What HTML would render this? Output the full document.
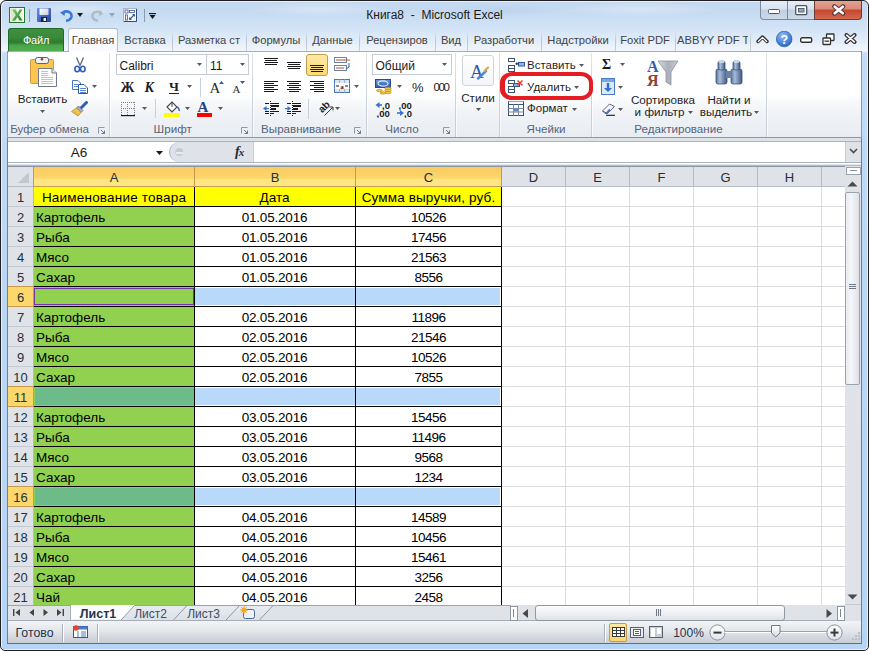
<!DOCTYPE html><html><head><meta charset="utf-8"><style>

*{margin:0;padding:0;box-sizing:border-box}
html,body{width:869px;height:651px;overflow:hidden;background:#fff;font-family:"Liberation Sans",sans-serif}
.ab{position:absolute}
.t{position:absolute;white-space:nowrap;line-height:1}
.c{font-size:13.5px;color:#000}
.hd{font-size:13px;color:#2b3a4a}
.ui{font-size:12px;color:#1e395b}

</style></head><body>
<div class="ab" style="left:0;top:0;width:869px;height:651px;border:1px solid #202020;border-radius:6px 6px 5px 5px;background:linear-gradient(180deg,#c2d8f1 0,#c6dbf2 12px,#d2e3f6 27px,#e0ebf8 38px,#f2f6fb 50px,#c4dcf5 52px,#bad6f5 300px,#b6d4f5 100%);box-shadow:inset 1px 1px 0 #e6f0fa,inset -1px -1px 0 #e6f0fa;overflow:hidden"></div>
<div class="ab" style="left:20px;top:2px;width:120px;height:14px;background:radial-gradient(ellipse at center,rgba(255,255,255,0.35) 0,rgba(255,255,255,0) 70%)"></div>
<div class="ab" style="left:250px;top:1px;width:140px;height:16px;background:radial-gradient(ellipse at center,rgba(255,255,255,0.30) 0,rgba(255,255,255,0) 70%)"></div>
<div class="ab" style="left:440px;top:3px;width:120px;height:14px;background:radial-gradient(ellipse at center,rgba(180,205,235,0.45) 0,rgba(180,205,235,0) 70%)"></div>
<div class="ab" style="left:560px;top:1px;width:160px;height:16px;background:radial-gradient(ellipse at center,rgba(255,255,255,0.30) 0,rgba(255,255,255,0) 70%)"></div>
<div class="ab" style="left:7px;top:51px;width:855px;height:593px;background:#6f7f94"></div>
<div class="ab" style="left:8px;top:163px;width:837px;height:443px;background:#fff"></div>
<div class="ab" style="left:8px;top:163px;width:853px;height:1px;background:#ffffff"></div>
<div class="ab" style="left:8px;top:164px;width:853px;height:1px;background:#e4e8ed"></div>
<div class="ab" style="left:8px;top:165px;width:853px;height:1px;background:#b4bcc6"></div>
<div class="ab" style="left:8px;top:166px;width:853px;height:1px;background:#8c96a2"></div>
<div class="ab" style="left:8px;top:167px;width:837px;height:19px;background:#dfe3e8"></div>
<div class="ab" style="left:8px;top:186px;width:837px;height:1px;background:#b7bec8"></div>
<div class="ab" style="left:8px;top:187px;width:25px;height:419px;background:#dfe3e8"></div>
<div class="ab" style="left:33px;top:167px;width:1px;height:439px;background:#b3bac4"></div>
<div class="ab" style="left:34px;top:206px;width:811px;height:1px;background:#dadcdd"></div>
<div class="ab" style="left:34px;top:226px;width:811px;height:1px;background:#dadcdd"></div>
<div class="ab" style="left:34px;top:246px;width:811px;height:1px;background:#dadcdd"></div>
<div class="ab" style="left:34px;top:266px;width:811px;height:1px;background:#dadcdd"></div>
<div class="ab" style="left:34px;top:286px;width:811px;height:1px;background:#dadcdd"></div>
<div class="ab" style="left:34px;top:306px;width:811px;height:1px;background:#dadcdd"></div>
<div class="ab" style="left:34px;top:326px;width:811px;height:1px;background:#dadcdd"></div>
<div class="ab" style="left:34px;top:346px;width:811px;height:1px;background:#dadcdd"></div>
<div class="ab" style="left:34px;top:366px;width:811px;height:1px;background:#dadcdd"></div>
<div class="ab" style="left:34px;top:386px;width:811px;height:1px;background:#dadcdd"></div>
<div class="ab" style="left:34px;top:406px;width:811px;height:1px;background:#dadcdd"></div>
<div class="ab" style="left:34px;top:426px;width:811px;height:1px;background:#dadcdd"></div>
<div class="ab" style="left:34px;top:446px;width:811px;height:1px;background:#dadcdd"></div>
<div class="ab" style="left:34px;top:466px;width:811px;height:1px;background:#dadcdd"></div>
<div class="ab" style="left:34px;top:486px;width:811px;height:1px;background:#dadcdd"></div>
<div class="ab" style="left:34px;top:506px;width:811px;height:1px;background:#dadcdd"></div>
<div class="ab" style="left:34px;top:526px;width:811px;height:1px;background:#dadcdd"></div>
<div class="ab" style="left:34px;top:546px;width:811px;height:1px;background:#dadcdd"></div>
<div class="ab" style="left:34px;top:566px;width:811px;height:1px;background:#dadcdd"></div>
<div class="ab" style="left:34px;top:586px;width:811px;height:1px;background:#dadcdd"></div>
<div class="ab" style="left:34px;top:606px;width:811px;height:1px;background:#dadcdd"></div>
<div class="ab" style="left:194px;top:187px;width:1px;height:419px;background:#dadcdd"></div>
<div class="ab" style="left:355px;top:187px;width:1px;height:419px;background:#dadcdd"></div>
<div class="ab" style="left:501px;top:187px;width:1px;height:419px;background:#dadcdd"></div>
<div class="ab" style="left:565px;top:187px;width:1px;height:419px;background:#dadcdd"></div>
<div class="ab" style="left:629px;top:187px;width:1px;height:419px;background:#dadcdd"></div>
<div class="ab" style="left:693px;top:187px;width:1px;height:419px;background:#dadcdd"></div>
<div class="ab" style="left:757px;top:187px;width:1px;height:419px;background:#dadcdd"></div>
<div class="ab" style="left:821px;top:187px;width:1px;height:419px;background:#dadcdd"></div>
<div class="ab" style="left:8px;top:206px;width:25px;height:1px;background:#c3c9d1"></div>
<div class="ab" style="left:8px;top:226px;width:25px;height:1px;background:#c3c9d1"></div>
<div class="ab" style="left:8px;top:246px;width:25px;height:1px;background:#c3c9d1"></div>
<div class="ab" style="left:8px;top:266px;width:25px;height:1px;background:#c3c9d1"></div>
<div class="ab" style="left:8px;top:286px;width:25px;height:1px;background:#c3c9d1"></div>
<div class="ab" style="left:8px;top:306px;width:25px;height:1px;background:#c3c9d1"></div>
<div class="ab" style="left:8px;top:326px;width:25px;height:1px;background:#c3c9d1"></div>
<div class="ab" style="left:8px;top:346px;width:25px;height:1px;background:#c3c9d1"></div>
<div class="ab" style="left:8px;top:366px;width:25px;height:1px;background:#c3c9d1"></div>
<div class="ab" style="left:8px;top:386px;width:25px;height:1px;background:#c3c9d1"></div>
<div class="ab" style="left:8px;top:406px;width:25px;height:1px;background:#c3c9d1"></div>
<div class="ab" style="left:8px;top:426px;width:25px;height:1px;background:#c3c9d1"></div>
<div class="ab" style="left:8px;top:446px;width:25px;height:1px;background:#c3c9d1"></div>
<div class="ab" style="left:8px;top:466px;width:25px;height:1px;background:#c3c9d1"></div>
<div class="ab" style="left:8px;top:486px;width:25px;height:1px;background:#c3c9d1"></div>
<div class="ab" style="left:8px;top:506px;width:25px;height:1px;background:#c3c9d1"></div>
<div class="ab" style="left:8px;top:526px;width:25px;height:1px;background:#c3c9d1"></div>
<div class="ab" style="left:8px;top:546px;width:25px;height:1px;background:#c3c9d1"></div>
<div class="ab" style="left:8px;top:566px;width:25px;height:1px;background:#c3c9d1"></div>
<div class="ab" style="left:8px;top:586px;width:25px;height:1px;background:#c3c9d1"></div>
<div class="ab" style="left:8px;top:606px;width:25px;height:1px;background:#c3c9d1"></div>
<div class="ab" style="left:194px;top:167px;width:1px;height:19px;background:#b3bac4"></div>
<div class="ab" style="left:355px;top:167px;width:1px;height:19px;background:#b3bac4"></div>
<div class="ab" style="left:501px;top:167px;width:1px;height:19px;background:#b3bac4"></div>
<div class="ab" style="left:565px;top:167px;width:1px;height:19px;background:#b3bac4"></div>
<div class="ab" style="left:629px;top:167px;width:1px;height:19px;background:#b3bac4"></div>
<div class="ab" style="left:693px;top:167px;width:1px;height:19px;background:#b3bac4"></div>
<div class="ab" style="left:757px;top:167px;width:1px;height:19px;background:#b3bac4"></div>
<div class="ab" style="left:821px;top:167px;width:1px;height:19px;background:#b3bac4"></div>
<div class="ab" style="left:34px;top:167px;width:467px;height:19px;background:linear-gradient(180deg,#f9cd60 0,#fbd56c 11px,#fde37e 12px,#fde886 100%)"></div>
<div class="ab" style="left:34px;top:186px;width:467px;height:1px;background:#c89a4e"></div>
<div class="ab" style="left:194px;top:167px;width:1px;height:19px;background:#c89a4e"></div>
<div class="ab" style="left:355px;top:167px;width:1px;height:19px;background:#c89a4e"></div>
<div class="ab" style="left:501px;top:167px;width:1px;height:20px;background:#c89a4e"></div>
<div class="ab" style="left:33px;top:167px;width:1px;height:20px;background:#c89a4e"></div>
<svg class="ab" style="left:18px;top:172px" width="12" height="12"><path d="M11 0 L11 11 L0 11 Z" fill="#c2c8d0"/></svg>
<div class="t" style="left:14.0px;top:171.3px;width:200px;text-align:center;font-size:13px;color:#262e38">A</div>
<div class="t" style="left:175.0px;top:171.3px;width:200px;text-align:center;font-size:13px;color:#262e38">B</div>
<div class="t" style="left:328.5px;top:171.3px;width:200px;text-align:center;font-size:13px;color:#262e38">C</div>
<div class="t" style="left:433.5px;top:171.3px;width:200px;text-align:center;font-size:13px;color:#262e38">D</div>
<div class="t" style="left:497.5px;top:171.3px;width:200px;text-align:center;font-size:13px;color:#262e38">E</div>
<div class="t" style="left:561.5px;top:171.3px;width:200px;text-align:center;font-size:13px;color:#262e38">F</div>
<div class="t" style="left:625.5px;top:171.3px;width:200px;text-align:center;font-size:13px;color:#262e38">G</div>
<div class="t" style="left:689.5px;top:171.3px;width:200px;text-align:center;font-size:13px;color:#262e38">H</div>
<div class="t" style="left:753.5px;top:171.3px;width:200px;text-align:center;font-size:13px;color:#262e38">I</div>
<div class="ab" style="left:34px;top:187px;width:467px;height:19px;background:#ffff00"></div>
<div class="ab" style="left:34px;top:207px;width:160px;height:19px;background:#92d050"></div>
<div class="ab" style="left:34px;top:227px;width:160px;height:19px;background:#92d050"></div>
<div class="ab" style="left:34px;top:247px;width:160px;height:19px;background:#92d050"></div>
<div class="ab" style="left:34px;top:267px;width:160px;height:19px;background:#92d050"></div>
<div class="ab" style="left:34px;top:287px;width:160px;height:19px;background:#92d050"></div>
<div class="ab" style="left:34px;top:307px;width:160px;height:19px;background:#92d050"></div>
<div class="ab" style="left:34px;top:327px;width:160px;height:19px;background:#92d050"></div>
<div class="ab" style="left:34px;top:347px;width:160px;height:19px;background:#92d050"></div>
<div class="ab" style="left:34px;top:367px;width:160px;height:19px;background:#92d050"></div>
<div class="ab" style="left:34px;top:387px;width:160px;height:19px;background:#92d050"></div>
<div class="ab" style="left:34px;top:407px;width:160px;height:19px;background:#92d050"></div>
<div class="ab" style="left:34px;top:427px;width:160px;height:19px;background:#92d050"></div>
<div class="ab" style="left:34px;top:447px;width:160px;height:19px;background:#92d050"></div>
<div class="ab" style="left:34px;top:467px;width:160px;height:19px;background:#92d050"></div>
<div class="ab" style="left:34px;top:487px;width:160px;height:19px;background:#92d050"></div>
<div class="ab" style="left:34px;top:507px;width:160px;height:19px;background:#92d050"></div>
<div class="ab" style="left:34px;top:527px;width:160px;height:19px;background:#92d050"></div>
<div class="ab" style="left:34px;top:547px;width:160px;height:19px;background:#92d050"></div>
<div class="ab" style="left:34px;top:567px;width:160px;height:19px;background:#92d050"></div>
<div class="ab" style="left:34px;top:587px;width:160px;height:19px;background:#92d050"></div>
<div class="ab" style="left:33px;top:286px;width:1px;height:21px;background:#c89a4e"></div>
<div class="ab" style="left:8px;top:287px;width:25px;height:19px;background:#fcd86c"></div>
<div class="ab" style="left:8px;top:286px;width:25px;height:1px;background:#c89a4e"></div>
<div class="ab" style="left:8px;top:306px;width:25px;height:1px;background:#c89a4e"></div>
<div class="ab" style="left:195px;top:288px;width:305px;height:17px;background:#b9d9fa"></div>
<div class="ab" style="left:33px;top:386px;width:1px;height:21px;background:#c89a4e"></div>
<div class="ab" style="left:8px;top:387px;width:25px;height:19px;background:#fcd86c"></div>
<div class="ab" style="left:8px;top:386px;width:25px;height:1px;background:#c89a4e"></div>
<div class="ab" style="left:8px;top:406px;width:25px;height:1px;background:#c89a4e"></div>
<div class="ab" style="left:195px;top:388px;width:305px;height:17px;background:#b9d9fa"></div>
<div class="ab" style="left:35px;top:388px;width:159px;height:17px;background:#6dbb88"></div>
<div class="ab" style="left:33px;top:486px;width:1px;height:21px;background:#c89a4e"></div>
<div class="ab" style="left:8px;top:487px;width:25px;height:19px;background:#fcd86c"></div>
<div class="ab" style="left:8px;top:486px;width:25px;height:1px;background:#c89a4e"></div>
<div class="ab" style="left:8px;top:506px;width:25px;height:1px;background:#c89a4e"></div>
<div class="ab" style="left:195px;top:488px;width:305px;height:17px;background:#b9d9fa"></div>
<div class="ab" style="left:35px;top:488px;width:159px;height:17px;background:#6dbb88"></div>
<div class="ab" style="left:34px;top:288px;width:160px;height:17px;border:1px solid #7437a8"></div>
<div class="ab" style="left:34px;top:206px;width:468px;height:1px;background:#000"></div>
<div class="ab" style="left:34px;top:226px;width:468px;height:1px;background:#000"></div>
<div class="ab" style="left:34px;top:246px;width:468px;height:1px;background:#000"></div>
<div class="ab" style="left:34px;top:266px;width:468px;height:1px;background:#000"></div>
<div class="ab" style="left:34px;top:286px;width:468px;height:1px;background:#000"></div>
<div class="ab" style="left:34px;top:306px;width:468px;height:1px;background:#000"></div>
<div class="ab" style="left:34px;top:326px;width:468px;height:1px;background:#000"></div>
<div class="ab" style="left:34px;top:346px;width:468px;height:1px;background:#000"></div>
<div class="ab" style="left:34px;top:366px;width:468px;height:1px;background:#000"></div>
<div class="ab" style="left:34px;top:386px;width:468px;height:1px;background:#000"></div>
<div class="ab" style="left:34px;top:406px;width:468px;height:1px;background:#000"></div>
<div class="ab" style="left:34px;top:426px;width:468px;height:1px;background:#000"></div>
<div class="ab" style="left:34px;top:446px;width:468px;height:1px;background:#000"></div>
<div class="ab" style="left:34px;top:466px;width:468px;height:1px;background:#000"></div>
<div class="ab" style="left:34px;top:486px;width:468px;height:1px;background:#000"></div>
<div class="ab" style="left:34px;top:506px;width:468px;height:1px;background:#000"></div>
<div class="ab" style="left:34px;top:526px;width:468px;height:1px;background:#000"></div>
<div class="ab" style="left:34px;top:546px;width:468px;height:1px;background:#000"></div>
<div class="ab" style="left:34px;top:566px;width:468px;height:1px;background:#000"></div>
<div class="ab" style="left:34px;top:586px;width:468px;height:1px;background:#000"></div>
<div class="ab" style="left:34px;top:606px;width:468px;height:1px;background:#000"></div>
<div class="ab" style="left:194px;top:187px;width:1px;height:419px;background:#000"></div>
<div class="ab" style="left:355px;top:187px;width:1px;height:419px;background:#000"></div>
<div class="ab" style="left:501px;top:187px;width:1px;height:419px;background:#000"></div>
<div class="t" style="left:5.5px;top:191px;width:30px;text-align:center;font-size:13px;color:#262e38">1</div>
<div class="t" style="left:5.5px;top:211px;width:30px;text-align:center;font-size:13px;color:#262e38">2</div>
<div class="t" style="left:5.5px;top:231px;width:30px;text-align:center;font-size:13px;color:#262e38">3</div>
<div class="t" style="left:5.5px;top:251px;width:30px;text-align:center;font-size:13px;color:#262e38">4</div>
<div class="t" style="left:5.5px;top:271px;width:30px;text-align:center;font-size:13px;color:#262e38">5</div>
<div class="t" style="left:5.5px;top:291px;width:30px;text-align:center;font-size:13px;color:#262e38">6</div>
<div class="t" style="left:5.5px;top:311px;width:30px;text-align:center;font-size:13px;color:#262e38">7</div>
<div class="t" style="left:5.5px;top:331px;width:30px;text-align:center;font-size:13px;color:#262e38">8</div>
<div class="t" style="left:5.5px;top:351px;width:30px;text-align:center;font-size:13px;color:#262e38">9</div>
<div class="t" style="left:5.5px;top:371px;width:30px;text-align:center;font-size:13px;color:#262e38">10</div>
<div class="t" style="left:5.5px;top:391px;width:30px;text-align:center;font-size:13px;color:#262e38">11</div>
<div class="t" style="left:5.5px;top:411px;width:30px;text-align:center;font-size:13px;color:#262e38">12</div>
<div class="t" style="left:5.5px;top:431px;width:30px;text-align:center;font-size:13px;color:#262e38">13</div>
<div class="t" style="left:5.5px;top:451px;width:30px;text-align:center;font-size:13px;color:#262e38">14</div>
<div class="t" style="left:5.5px;top:471px;width:30px;text-align:center;font-size:13px;color:#262e38">15</div>
<div class="t" style="left:5.5px;top:491px;width:30px;text-align:center;font-size:13px;color:#262e38">16</div>
<div class="t" style="left:5.5px;top:511px;width:30px;text-align:center;font-size:13px;color:#262e38">17</div>
<div class="t" style="left:5.5px;top:531px;width:30px;text-align:center;font-size:13px;color:#262e38">18</div>
<div class="t" style="left:5.5px;top:551px;width:30px;text-align:center;font-size:13px;color:#262e38">19</div>
<div class="t" style="left:5.5px;top:571px;width:30px;text-align:center;font-size:13px;color:#262e38">20</div>
<div class="t" style="left:5.5px;top:591px;width:30px;text-align:center;font-size:13px;color:#262e38">21</div>
<div class="t" style="left:14.0px;top:191px;width:200px;text-align:center;font-size:13.5px;color:#000;letter-spacing:0.2px">Наименование товара</div>
<div class="t" style="left:174.5px;top:191px;width:200px;text-align:center;font-size:13.5px;color:#000">Дата</div>
<div class="t" style="left:328.5px;top:191px;width:200px;text-align:center;font-size:13.5px;color:#000;letter-spacing:0.15px">Сумма выручки, руб.</div>
<div class="t" style="left:36px;top:211px;font-size:13.5px;color:#000">Картофель</div>
<div class="t" style="left:174.5px;top:211px;width:200px;text-align:center;font-size:13.5px;color:#000;letter-spacing:-0.2px">01.05.2016</div>
<div class="t" style="left:328.5px;top:211px;width:200px;text-align:center;font-size:13.5px;color:#000;letter-spacing:-0.5px">10526</div>
<div class="t" style="left:36px;top:231px;font-size:13.5px;color:#000">Рыба</div>
<div class="t" style="left:174.5px;top:231px;width:200px;text-align:center;font-size:13.5px;color:#000;letter-spacing:-0.2px">01.05.2016</div>
<div class="t" style="left:328.5px;top:231px;width:200px;text-align:center;font-size:13.5px;color:#000;letter-spacing:-0.5px">17456</div>
<div class="t" style="left:36px;top:251px;font-size:13.5px;color:#000">Мясо</div>
<div class="t" style="left:174.5px;top:251px;width:200px;text-align:center;font-size:13.5px;color:#000;letter-spacing:-0.2px">01.05.2016</div>
<div class="t" style="left:328.5px;top:251px;width:200px;text-align:center;font-size:13.5px;color:#000;letter-spacing:-0.5px">21563</div>
<div class="t" style="left:36px;top:271px;font-size:13.5px;color:#000">Сахар</div>
<div class="t" style="left:174.5px;top:271px;width:200px;text-align:center;font-size:13.5px;color:#000;letter-spacing:-0.2px">01.05.2016</div>
<div class="t" style="left:328.5px;top:271px;width:200px;text-align:center;font-size:13.5px;color:#000;letter-spacing:-0.5px">8556</div>
<div class="t" style="left:36px;top:311px;font-size:13.5px;color:#000">Картофель</div>
<div class="t" style="left:174.5px;top:311px;width:200px;text-align:center;font-size:13.5px;color:#000;letter-spacing:-0.2px">02.05.2016</div>
<div class="t" style="left:328.5px;top:311px;width:200px;text-align:center;font-size:13.5px;color:#000;letter-spacing:-0.5px">11896</div>
<div class="t" style="left:36px;top:331px;font-size:13.5px;color:#000">Рыба</div>
<div class="t" style="left:174.5px;top:331px;width:200px;text-align:center;font-size:13.5px;color:#000;letter-spacing:-0.2px">02.05.2016</div>
<div class="t" style="left:328.5px;top:331px;width:200px;text-align:center;font-size:13.5px;color:#000;letter-spacing:-0.5px">21546</div>
<div class="t" style="left:36px;top:351px;font-size:13.5px;color:#000">Мясо</div>
<div class="t" style="left:174.5px;top:351px;width:200px;text-align:center;font-size:13.5px;color:#000;letter-spacing:-0.2px">02.05.2016</div>
<div class="t" style="left:328.5px;top:351px;width:200px;text-align:center;font-size:13.5px;color:#000;letter-spacing:-0.5px">10526</div>
<div class="t" style="left:36px;top:371px;font-size:13.5px;color:#000">Сахар</div>
<div class="t" style="left:174.5px;top:371px;width:200px;text-align:center;font-size:13.5px;color:#000;letter-spacing:-0.2px">02.05.2016</div>
<div class="t" style="left:328.5px;top:371px;width:200px;text-align:center;font-size:13.5px;color:#000;letter-spacing:-0.5px">7855</div>
<div class="t" style="left:36px;top:411px;font-size:13.5px;color:#000">Картофель</div>
<div class="t" style="left:174.5px;top:411px;width:200px;text-align:center;font-size:13.5px;color:#000;letter-spacing:-0.2px">03.05.2016</div>
<div class="t" style="left:328.5px;top:411px;width:200px;text-align:center;font-size:13.5px;color:#000;letter-spacing:-0.5px">15456</div>
<div class="t" style="left:36px;top:431px;font-size:13.5px;color:#000">Рыба</div>
<div class="t" style="left:174.5px;top:431px;width:200px;text-align:center;font-size:13.5px;color:#000;letter-spacing:-0.2px">03.05.2016</div>
<div class="t" style="left:328.5px;top:431px;width:200px;text-align:center;font-size:13.5px;color:#000;letter-spacing:-0.5px">11496</div>
<div class="t" style="left:36px;top:451px;font-size:13.5px;color:#000">Мясо</div>
<div class="t" style="left:174.5px;top:451px;width:200px;text-align:center;font-size:13.5px;color:#000;letter-spacing:-0.2px">03.05.2016</div>
<div class="t" style="left:328.5px;top:451px;width:200px;text-align:center;font-size:13.5px;color:#000;letter-spacing:-0.5px">9568</div>
<div class="t" style="left:36px;top:471px;font-size:13.5px;color:#000">Сахар</div>
<div class="t" style="left:174.5px;top:471px;width:200px;text-align:center;font-size:13.5px;color:#000;letter-spacing:-0.2px">03.05.2016</div>
<div class="t" style="left:328.5px;top:471px;width:200px;text-align:center;font-size:13.5px;color:#000;letter-spacing:-0.5px">1234</div>
<div class="t" style="left:36px;top:511px;font-size:13.5px;color:#000">Картофель</div>
<div class="t" style="left:174.5px;top:511px;width:200px;text-align:center;font-size:13.5px;color:#000;letter-spacing:-0.2px">04.05.2016</div>
<div class="t" style="left:328.5px;top:511px;width:200px;text-align:center;font-size:13.5px;color:#000;letter-spacing:-0.5px">14589</div>
<div class="t" style="left:36px;top:531px;font-size:13.5px;color:#000">Рыба</div>
<div class="t" style="left:174.5px;top:531px;width:200px;text-align:center;font-size:13.5px;color:#000;letter-spacing:-0.2px">04.05.2016</div>
<div class="t" style="left:328.5px;top:531px;width:200px;text-align:center;font-size:13.5px;color:#000;letter-spacing:-0.5px">10456</div>
<div class="t" style="left:36px;top:551px;font-size:13.5px;color:#000">Мясо</div>
<div class="t" style="left:174.5px;top:551px;width:200px;text-align:center;font-size:13.5px;color:#000;letter-spacing:-0.2px">04.05.2016</div>
<div class="t" style="left:328.5px;top:551px;width:200px;text-align:center;font-size:13.5px;color:#000;letter-spacing:-0.5px">15461</div>
<div class="t" style="left:36px;top:571px;font-size:13.5px;color:#000">Сахар</div>
<div class="t" style="left:174.5px;top:571px;width:200px;text-align:center;font-size:13.5px;color:#000;letter-spacing:-0.2px">04.05.2016</div>
<div class="t" style="left:328.5px;top:571px;width:200px;text-align:center;font-size:13.5px;color:#000;letter-spacing:-0.5px">3256</div>
<div class="t" style="left:36px;top:591px;font-size:13.5px;color:#000">Чай</div>
<div class="t" style="left:174.5px;top:591px;width:200px;text-align:center;font-size:13.5px;color:#000;letter-spacing:-0.2px">04.05.2016</div>
<div class="t" style="left:328.5px;top:591px;width:200px;text-align:center;font-size:13.5px;color:#000;letter-spacing:-0.5px">2458</div>
<div class="t" style="left:334.50px;top:9.34px;width:200px;text-align:center;font-size:12px;color:#1a1a1a">Книга8&nbsp;&nbsp;-&nbsp;&nbsp;Microsoft Excel</div>
<svg class="ab" style="left:9px;top:7px;" width="17" height="17" viewBox="0 0 17 17"><defs><linearGradient id="xg" x1="0" y1="0" x2="1" y2="1"><stop offset="0" stop-color="#7fd36a"/><stop offset="1" stop-color="#1f7a2c"/></linearGradient></defs><rect x="0.5" y="0.5" width="15" height="15" fill="#f4f8ee" stroke="#1f7a2c"/><rect x="1.5" y="1.5" width="6" height="13" fill="#dfe8cc"/><path d="M3 2.5 L6.5 2.5 L8.5 6 L10.5 2.5 L13.5 2.5 L10 8 L13.5 13.5 L10.5 13.5 L8.5 10 L6 13.5 L3 13.5 L6.8 8 Z" fill="url(#xg)"/></svg>
<div class="ab" style="left:29px;top:9px;width:1px;height:13px;background:#8a9bb0"></div>
<svg class="ab" style="left:37px;top:8px;" width="15" height="14" viewBox="0 0 15 14"><defs><linearGradient id="sg" x1="0" y1="0" x2="1" y2="1"><stop offset="0" stop-color="#6b8fe0"/><stop offset="1" stop-color="#26459a"/></linearGradient><linearGradient id="sl" x1="0" y1="0" x2="1" y2="1"><stop offset="0" stop-color="#fff"/><stop offset="1" stop-color="#c8d0dc"/></linearGradient></defs><rect x="0" y="0" width="14" height="14" rx="1" fill="url(#sg)"/><rect x="2.5" y="0.5" width="9" height="6.5" fill="url(#sl)"/><rect x="4" y="9" width="6" height="5" fill="#1a2238"/><rect x="6.5" y="10" width="2.5" height="3" fill="#e8ecf2"/></svg>
<svg class="ab" style="left:59px;top:8px;" width="14" height="14" viewBox="0 0 14 14"><path d="M1 4.5 L6.5 2 L5.5 8 Z" fill="#3a78d8"/><path d="M4.5 4.2 C9 2 13 4.5 12.5 8.5 C12 11 10 12.5 7 12.8" fill="none" stroke="#3a78d8" stroke-width="2.6"/></svg>
<svg class="ab" style="left:77px;top:13px;" width="7" height="5" viewBox="0 0 7 5"><path d="M0 0 L6 0 L3 4 Z" fill="#1a1a1a"/></svg>
<svg class="ab" style="left:90px;top:8px;" width="14" height="14" viewBox="0 0 14 14"><path d="M10 2 L13 6 L9 8 Z" fill="#b2bac4"/><path d="M11 5 C7 2.5 2 4 2.5 8.5 C3 11 5 12.5 8 12.5" fill="none" stroke="#b2bac4" stroke-width="2.6"/></svg>
<svg class="ab" style="left:109px;top:13px;" width="7" height="5" viewBox="0 0 7 5"><path d="M0 0 L6 0 L3 4 Z" fill="#9aa6b4"/></svg>
<svg class="ab" style="left:123px;top:8px;" width="14" height="14" viewBox="0 0 14 14"><rect x="0.5" y="0.5" width="13" height="13" fill="#f6f8fb" stroke="#aab4c2"/><path d="M13.5 1 L13.5 13.5 L1 13.5" fill="none" stroke="#2f4a86"/><rect x="2" y="2" width="3" height="3" fill="#fff" stroke="#3a5590" stroke-width="0.8"/><rect x="6.5" y="2.5" width="5" height="2" fill="#fff" stroke="#3a5590" stroke-width="0.8"/><rect x="2.5" y="7" width="2" height="5" fill="#fff" stroke="#3a5590" stroke-width="0.8"/><path d="M7 11 L11 7" stroke="#3a5590" stroke-width="1.1"/><path d="M9.5 6.5 L11.5 6.5 L11.5 8.5 M6.5 9.5 L6.5 11.5 L8.5 11.5" fill="none" stroke="#3a5590" stroke-width="1"/></svg>
<div class="ab" style="left:144px;top:9px;width:1px;height:13px;background:#8a9bb0"></div>
<svg class="ab" style="left:149px;top:13px;" width="8" height="7" viewBox="0 0 8 7"><rect x="0" y="0" width="7" height="1.2" fill="#1a1a1a"/><path d="M0.5 2 L6.5 2 L3.5 6 Z" fill="#1a1a1a"/></svg>
<div class="ab" style="left:760px;top:1px;width:55px;height:19px;border:1px solid #7a8a9e;border-top:none;border-radius:0 0 0 4px;background:linear-gradient(180deg,#e5edf7 0,#d8e3f0 45%,#c0cfe0 50%,#ccd9e8 100%)"></div>
<div class="ab" style="left:787px;top:1px;width:1px;height:18px;background:#7a8a9e"></div>
<div class="ab" style="left:814px;top:1px;width:48px;height:19px;border:1px solid #6e3c34;border-top:none;border-radius:0 0 4px 0;background:linear-gradient(180deg,#e8a294 0,#d98a78 45%,#c7452c 50%,#d46a50 100%)"></div>
<svg class="ab" style="left:768px;top:9px;" width="13" height="6" viewBox="0 0 13 6"><rect x="0.5" y="0.5" width="11" height="4" rx="1" fill="#fff" stroke="#4a5668"/></svg>
<svg class="ab" style="left:795px;top:5px;" width="13" height="11" viewBox="0 0 13 11"><rect x="0.7" y="0.7" width="11" height="9" rx="1" fill="#fff" stroke="#4a5668" stroke-width="1.3"/><rect x="3.5" y="3.5" width="5.5" height="3.5" fill="#9aa8b8" stroke="#4a5668" stroke-width="0.9"/></svg>
<svg class="ab" style="left:832px;top:4px;" width="14" height="12" viewBox="0 0 14 12"><path d="M2.5 2.5 L11 9.5 M11 2.5 L2.5 9.5" stroke="#5a3a38" stroke-width="4.6" stroke-linecap="round"/><path d="M2.7 2.7 L10.8 9.3 M10.8 2.7 L2.7 9.3" stroke="#fff" stroke-width="2.6" stroke-linecap="round"/></svg>
<div class="ab" style="left:8px;top:28px;width:56px;height:24px;border:1px solid #1d6b27;border-bottom:none;border-radius:3px 3px 0 0;background:linear-gradient(180deg,#3f8f3e 0,#3a8a3a 35%,#2e7c31 58%,#4ba648 72%,#55ae4f 100%)"></div>
<div class="t" style="left:8.00px;top:35.19px;width:56px;text-align:center;font-size:11px;color:#fff;letter-spacing:-0.2px">Файл</div>
<div class="ab" style="left:68px;top:28px;width:50px;height:24px;border:1px solid #b4c0cf;border-bottom:none;border-radius:3px 3px 0 0;background:linear-gradient(180deg,#fefefe 0,#f7f9fc 100%)"></div>
<div class="t" style="left:70.00px;top:35.02px;width:46px;text-align:center;font-size:11.2px;color:#444;overflow:hidden;">Главная</div>
<div class="t" style="left:120.00px;top:35.02px;width:50px;text-align:center;font-size:11.2px;color:#444;overflow:hidden;">Вставка</div>
<div class="t" style="left:174.00px;top:35.02px;width:70px;text-align:center;font-size:11.2px;color:#444;overflow:hidden;">Разметка ст</div>
<div class="t" style="left:248.00px;top:35.02px;width:56px;text-align:center;font-size:11.2px;color:#444;overflow:hidden;">Формулы</div>
<div class="t" style="left:308.00px;top:35.02px;width:49px;text-align:center;font-size:11.2px;color:#444;overflow:hidden;">Данные</div>
<div class="t" style="left:361.00px;top:35.02px;width:72px;text-align:center;font-size:11.2px;color:#444;overflow:hidden;">Рецензиров</div>
<div class="t" style="left:437.00px;top:35.02px;width:28px;text-align:center;font-size:11.2px;color:#444;overflow:hidden;">Вид</div>
<div class="t" style="left:469.00px;top:35.02px;width:70px;text-align:center;font-size:11.2px;color:#444;overflow:hidden;">Разработчи</div>
<div class="t" style="left:543.00px;top:35.02px;width:70px;text-align:center;font-size:11.2px;color:#444;overflow:hidden;">Надстройки</div>
<div class="t" style="left:617.00px;top:35.02px;width:56px;text-align:center;font-size:11.2px;color:#444;overflow:hidden;">Foxit PDF</div>
<div class="t" style="left:677.00px;top:35.02px;width:71px;text-align:center;font-size:11.2px;color:#444;overflow:hidden;">ABBYY PDF T</div>
<div class="ab" style="left:172px;top:31px;width:1px;height:20px;background:linear-gradient(180deg,rgba(160,175,195,0) 0,#b8c4d2 50%,#c8d2de 100%)"></div>
<div class="ab" style="left:246px;top:31px;width:1px;height:20px;background:linear-gradient(180deg,rgba(160,175,195,0) 0,#b8c4d2 50%,#c8d2de 100%)"></div>
<div class="ab" style="left:306px;top:31px;width:1px;height:20px;background:linear-gradient(180deg,rgba(160,175,195,0) 0,#b8c4d2 50%,#c8d2de 100%)"></div>
<div class="ab" style="left:359px;top:31px;width:1px;height:20px;background:linear-gradient(180deg,rgba(160,175,195,0) 0,#b8c4d2 50%,#c8d2de 100%)"></div>
<div class="ab" style="left:435px;top:31px;width:1px;height:20px;background:linear-gradient(180deg,rgba(160,175,195,0) 0,#b8c4d2 50%,#c8d2de 100%)"></div>
<div class="ab" style="left:467px;top:31px;width:1px;height:20px;background:linear-gradient(180deg,rgba(160,175,195,0) 0,#b8c4d2 50%,#c8d2de 100%)"></div>
<div class="ab" style="left:541px;top:31px;width:1px;height:20px;background:linear-gradient(180deg,rgba(160,175,195,0) 0,#b8c4d2 50%,#c8d2de 100%)"></div>
<div class="ab" style="left:615px;top:31px;width:1px;height:20px;background:linear-gradient(180deg,rgba(160,175,195,0) 0,#b8c4d2 50%,#c8d2de 100%)"></div>
<div class="ab" style="left:675px;top:31px;width:1px;height:20px;background:linear-gradient(180deg,rgba(160,175,195,0) 0,#b8c4d2 50%,#c8d2de 100%)"></div>
<div class="ab" style="left:750px;top:31px;width:1px;height:20px;background:linear-gradient(180deg,rgba(160,175,195,0) 0,#b8c4d2 50%,#c8d2de 100%)"></div>
<svg class="ab" style="left:756px;top:35px;" width="13" height="9" viewBox="0 0 13 9"><path d="M2 6.5 L6.5 2 L11 6.5" fill="none" stroke="#2e2e2e" stroke-width="3.4" stroke-linecap="round" stroke-linejoin="round"/><path d="M2.3 6.5 L6.5 2.3 L10.7 6.5" fill="none" stroke="#fff" stroke-width="1.2" stroke-linecap="round" stroke-linejoin="round"/></svg>
<svg class="ab" style="left:776px;top:31px;" width="17" height="17" viewBox="0 0 17 17"><defs><radialGradient id="hg" cx="40%" cy="30%" r="70%"><stop offset="0" stop-color="#8fc0f5"/><stop offset="1" stop-color="#2a66c8"/></radialGradient></defs><circle cx="8.2" cy="8" r="7.8" fill="url(#hg)" stroke="#2a5aa8" stroke-width="0.7"/><text x="8.2" y="13" font-family="Liberation Sans" font-weight="bold" font-size="12.5" fill="#fff" text-anchor="middle">?</text></svg>
<svg class="ab" style="left:800px;top:37px;" width="13" height="7" viewBox="0 0 13 7"><rect x="0.7" y="0.7" width="11" height="4.6" rx="1.5" fill="#fff" stroke="#333" stroke-width="1.4"/></svg>
<svg class="ab" style="left:822px;top:33px;" width="13" height="13" viewBox="0 0 13 13"><rect x="4.5" y="1" width="7.5" height="6.5" rx="0.5" fill="#fff" stroke="#333" stroke-width="1.3"/><rect x="1" y="5" width="7.5" height="6.5" rx="0.5" fill="#fff" stroke="#333" stroke-width="1.3"/><rect x="2.5" y="7.5" width="4.5" height="1.3" fill="#333"/></svg>
<svg class="ab" style="left:844px;top:33px;" width="13" height="11" viewBox="0 0 13 11"><path d="M2.5 2 L10.5 9 M10.5 2 L2.5 9" stroke="#333" stroke-width="4" stroke-linecap="round"/><path d="M2.7 2.2 L10.3 8.8 M10.3 2.2 L2.7 8.8" stroke="#fff" stroke-width="1.6" stroke-linecap="round"/></svg>
<div class="ab" style="left:7px;top:51px;width:855px;height:87px;border:1px solid #8e98a6;border-top-color:#a4adba;border-radius:2px 2px 0 0;background:linear-gradient(180deg,#ffffff 0,#ffffff 50%,#f6f8fa 60%,#eef1f5 78%,#e9edf2 100%)"></div>
<div class="ab" style="left:69px;top:51px;width:48px;height:1px;background:#fdfdfe"></div>
<div class="ab" style="left:109px;top:53px;width:1px;height:84px;background:linear-gradient(180deg,#dfe3e9 0,#cdd3dc 50%,#c8ced8 100%)"></div>
<div class="ab" style="left:110px;top:53px;width:1px;height:84px;background:rgba(255,255,255,0.7)"></div>
<div class="ab" style="left:252px;top:53px;width:1px;height:84px;background:linear-gradient(180deg,#dfe3e9 0,#cdd3dc 50%,#c8ced8 100%)"></div>
<div class="ab" style="left:253px;top:53px;width:1px;height:84px;background:rgba(255,255,255,0.7)"></div>
<div class="ab" style="left:366px;top:53px;width:1px;height:84px;background:linear-gradient(180deg,#dfe3e9 0,#cdd3dc 50%,#c8ced8 100%)"></div>
<div class="ab" style="left:367px;top:53px;width:1px;height:84px;background:rgba(255,255,255,0.7)"></div>
<div class="ab" style="left:455px;top:53px;width:1px;height:84px;background:linear-gradient(180deg,#dfe3e9 0,#cdd3dc 50%,#c8ced8 100%)"></div>
<div class="ab" style="left:456px;top:53px;width:1px;height:84px;background:rgba(255,255,255,0.7)"></div>
<div class="ab" style="left:499px;top:53px;width:1px;height:84px;background:linear-gradient(180deg,#dfe3e9 0,#cdd3dc 50%,#c8ced8 100%)"></div>
<div class="ab" style="left:500px;top:53px;width:1px;height:84px;background:rgba(255,255,255,0.7)"></div>
<div class="ab" style="left:591px;top:53px;width:1px;height:84px;background:linear-gradient(180deg,#dfe3e9 0,#cdd3dc 50%,#c8ced8 100%)"></div>
<div class="ab" style="left:592px;top:53px;width:1px;height:84px;background:rgba(255,255,255,0.7)"></div>
<div class="ab" style="left:766px;top:53px;width:1px;height:84px;background:linear-gradient(180deg,#dfe3e9 0,#cdd3dc 50%,#c8ced8 100%)"></div>
<div class="ab" style="left:767px;top:53px;width:1px;height:84px;background:rgba(255,255,255,0.7)"></div>
<div class="t" style="left:-10.40px;top:123.18px;width:120px;text-align:center;font-size:11.6px;color:#56647a">Буфер обмена</div>
<div class="t" style="left:112.70px;top:123.18px;width:120px;text-align:center;font-size:11.6px;color:#56647a">Шрифт</div>
<div class="t" style="left:241.00px;top:123.18px;width:120px;text-align:center;font-size:11.6px;color:#56647a">Выравнивание</div>
<div class="t" style="left:342.00px;top:123.18px;width:120px;text-align:center;font-size:11.6px;color:#56647a">Число</div>
<div class="t" style="left:486.00px;top:123.18px;width:120px;text-align:center;font-size:11.6px;color:#56647a">Ячейки</div>
<div class="t" style="left:618.50px;top:123.18px;width:120px;text-align:center;font-size:11.6px;color:#56647a">Редактирование</div>
<svg class="ab" style="left:98px;top:127px;" width="8" height="7" viewBox="0 0 8 7"><path d="M0.5 6.5 L0.5 0.5 L6.5 0.5" fill="none" stroke="#8e98a6"/><path d="M3 3 L6.5 6.5 M6.5 3.5 L6.5 6.5 L3.5 6.5" fill="none" stroke="#6e7886"/></svg>
<svg class="ab" style="left:241px;top:127px;" width="8" height="7" viewBox="0 0 8 7"><path d="M0.5 6.5 L0.5 0.5 L6.5 0.5" fill="none" stroke="#8e98a6"/><path d="M3 3 L6.5 6.5 M6.5 3.5 L6.5 6.5 L3.5 6.5" fill="none" stroke="#6e7886"/></svg>
<svg class="ab" style="left:354px;top:127px;" width="8" height="7" viewBox="0 0 8 7"><path d="M0.5 6.5 L0.5 0.5 L6.5 0.5" fill="none" stroke="#8e98a6"/><path d="M3 3 L6.5 6.5 M6.5 3.5 L6.5 6.5 L3.5 6.5" fill="none" stroke="#6e7886"/></svg>
<svg class="ab" style="left:443px;top:127px;" width="8" height="7" viewBox="0 0 8 7"><path d="M0.5 6.5 L0.5 0.5 L6.5 0.5" fill="none" stroke="#8e98a6"/><path d="M3 3 L6.5 6.5 M6.5 3.5 L6.5 6.5 L3.5 6.5" fill="none" stroke="#6e7886"/></svg>
<svg class="ab" style="left:29px;top:56px;" width="29" height="32" viewBox="0 0 29 32"><rect x="1.5" y="3.5" width="23" height="24" rx="1" fill="#fbc64e" stroke="#cf9a45"/><rect x="6.5" y="1.5" width="13" height="6" rx="2" fill="#eef1f5" stroke="#5a6270"/><circle cx="13" cy="3.2" r="1.3" fill="#8a4a2a"/><path d="M9.5 12.5 L23 12.5 L27.5 17 L27.5 30.5 L9.5 30.5 Z" fill="#fff" stroke="#6e7888"/><path d="M23 12.5 L23 17 L27.5 17" fill="#e6eaf0" stroke="#6e7888"/><path d="M12 15.5h7M12 17.5h7M12 19.5h7M12 21.5h12M12 23.5h12M12 25.5h12M12 27.5h12" stroke="#bcc3cc" stroke-width="1"/></svg>
<div class="t" style="left:7.50px;top:92.80px;width:70px;text-align:center;font-size:11.7px;color:#1f1f1f">Вставить</div>
<svg class="ab" style="left:40px;top:110px;" width="6" height="4" viewBox="0 0 6 4"><path d="M0 0 L5 0 L2.5 3 Z" fill="#5a5a5a"/></svg>
<svg class="ab" style="left:74px;top:57px;" width="12" height="16" viewBox="0 0 12 16"><path d="M2.5 0.5 L6.2 9 M9.5 0.5 L5.8 9" stroke="#6a7280" stroke-width="1.4"/><ellipse cx="3.2" cy="12" rx="2.3" ry="2.8" fill="none" stroke="#2e5cc0" stroke-width="1.6"/><ellipse cx="8.8" cy="12" rx="2.3" ry="2.8" fill="none" stroke="#2e5cc0" stroke-width="1.6"/></svg>
<svg class="ab" style="left:72px;top:80px;" width="16" height="14" viewBox="0 0 16 14"><path d="M0.5 0.5 L6 0.5 L8.5 3 L8.5 9.5 L0.5 9.5 Z" fill="#fff" stroke="#4a72c0"/><path d="M6.5 4.5 L12 4.5 L15.5 8 L15.5 13.5 L6.5 13.5 Z" fill="#fff" stroke="#2f5aa8"/><path d="M2 4.5h5M2 6.5h4M8 8.5h6M8 10.5h6M8 12.5h6" stroke="#5a86d0"/></svg>
<svg class="ab" style="left:92px;top:85px;" width="6" height="4" viewBox="0 0 6 4"><path d="M0 0 L5 0 L2.5 3 Z" fill="#5a5a5a"/></svg>
<svg class="ab" style="left:71px;top:101px;" width="18" height="16" viewBox="0 0 18 16"><path d="M10.5 6.5 L15.5 1.5" stroke="#2e5cb8" stroke-width="3" stroke-linecap="round"/><path d="M7.5 5 L12 9.5 L10 11.5 L5.5 7 Z" fill="#a8b0bc" stroke="#5a6270" stroke-width="0.7"/><path d="M5.5 7 L10 11.5 L7 15 L0.5 10.5 Z" fill="#f2c54e" stroke="#b88a2a" stroke-width="0.8"/><path d="M3 10.5 L6.5 13" stroke="#d9a63a" stroke-width="0.8"/></svg>
<div class="ab" style="left:116px;top:54px;width:91px;height:21px;border:1px solid #c4ccd8;background:#fff"></div>
<div class="ab" style="left:206px;top:54px;width:43px;height:21px;border:1px solid #c4ccd8;background:#fff"></div>
<div class="t" style="left:119.5px;top:60.04px;font-size:12px;color:#1a1a1a">Calibri</div>
<div class="t" style="left:210px;top:60.04px;font-size:12px;color:#1a1a1a">11</div>
<svg class="ab" style="left:197px;top:63px;" width="6" height="4" viewBox="0 0 6 4"><path d="M0 0 L5 0 L2.5 3 Z" fill="#5a5a5a"/></svg>
<svg class="ab" style="left:240px;top:63px;" width="6" height="4" viewBox="0 0 6 4"><path d="M0 0 L5 0 L2.5 3 Z" fill="#5a5a5a"/></svg>
<div class="t" style="left:120.5px;top:81.15px;font-size:14px;font-family:'Liberation Serif';font-weight:bold;color:#1f1f1f">Ж</div>
<div class="t" style="left:144.5px;top:81.15px;font-size:14px;font-family:'Liberation Serif';font-weight:bold;font-style:italic;color:#1f1f1f">К</div>
<div class="t" style="left:169px;top:80.37px;font-size:13.5px;font-family:'Liberation Serif';font-weight:bold;color:#1f1f1f">Ч</div>
<div class="ab" style="left:169px;top:93px;width:10px;height:1px;background:#1f1f1f"></div>
<svg class="ab" style="left:187px;top:85px;" width="6" height="4" viewBox="0 0 6 4"><path d="M0 0 L5 0 L2.5 3 Z" fill="#5a5a5a"/></svg>
<div class="ab" style="left:200px;top:78px;width:1px;height:19px;background:#c8d0da"></div>
<div class="t" style="left:209.5px;top:80.80px;font-size:15px;font-family:'Liberation Serif';color:#2a2a2a">A</div>
<svg class="ab" style="left:219px;top:81px;" width="6" height="4" viewBox="0 0 6 4"><path d="M0 3 L5 3 L2.5 0 Z" fill="#2f5fae"/></svg>
<div class="t" style="left:232.5px;top:84.19px;font-size:11px;font-family:'Liberation Serif';color:#2a2a2a">A</div>
<svg class="ab" style="left:240px;top:81px;" width="6" height="4" viewBox="0 0 6 4"><path d="M0 0 L5 0 L2.5 3 Z" fill="#2f5fae"/></svg>
<svg class="ab" style="left:121px;top:102px;" width="15" height="15" viewBox="0 0 15 15"><path d="M0 0.5h14M0 6.5h14M0.5 0v13M6.5 0v13M13.5 0v13" stroke="#7a828e" stroke-dasharray="1 1"/><rect x="0" y="13" width="14" height="1.2" fill="#1a1a1a"/></svg>
<svg class="ab" style="left:142px;top:107px;" width="6" height="4" viewBox="0 0 6 4"><path d="M0 0 L5 0 L2.5 3 Z" fill="#5a5a5a"/></svg>
<div class="ab" style="left:155px;top:99px;width:1px;height:19px;background:#c8d0da"></div>
<svg class="ab" style="left:164px;top:100px;" width="17" height="17" viewBox="0 0 17 17"><path d="M3 7 L8 2 L13 7 L8 12 Z" fill="#fff" stroke="#444" stroke-width="1.1"/><path d="M8 2 L8 7" stroke="#444"/><path d="M13 7 C15 8 15.5 10 15 11" fill="none" stroke="#2f6fcf" stroke-width="1.6"/><rect x="0" y="13" width="16" height="4" fill="#ffff00"/></svg>
<svg class="ab" style="left:185px;top:107px;" width="6" height="4" viewBox="0 0 6 4"><path d="M0 0 L5 0 L2.5 3 Z" fill="#5a5a5a"/></svg>
<div class="t" style="left:197.5px;top:100.30px;font-size:15px;font-family:'Liberation Serif';font-weight:bold;color:#1f3f8f">A</div>
<div class="ab" style="left:197px;top:113px;width:15px;height:4px;background:#ff0000"></div>
<svg class="ab" style="left:218px;top:107px;" width="6" height="4" viewBox="0 0 6 4"><path d="M0 0 L5 0 L2.5 3 Z" fill="#5a5a5a"/></svg>
<svg class="ab" style="left:264px;top:58px;" width="16" height="14" viewBox="0 0 16 14"><rect x="0" y="0" width="14" height="1" fill="#1a1a1a"/><rect x="1" y="2" width="12" height="1" fill="#1a1a1a"/><rect x="0" y="4" width="14" height="1" fill="#1a1a1a"/><rect x="1" y="6" width="12" height="1" fill="#1a1a1a"/></svg>
<svg class="ab" style="left:287px;top:62px;" width="16" height="14" viewBox="0 0 16 14"><rect x="0" y="0" width="14" height="1" fill="#1a1a1a"/><rect x="1" y="2" width="12" height="1" fill="#1a1a1a"/><rect x="0" y="4" width="14" height="1" fill="#1a1a1a"/><rect x="1" y="6" width="12" height="1" fill="#1a1a1a"/></svg>
<div class="ab" style="left:306px;top:54px;width:22px;height:22px;border:1px solid #c29b4a;border-radius:3px;background:linear-gradient(180deg,#fde9a6 0,#fcdb72 100%)"></div>
<svg class="ab" style="left:310px;top:65px;" width="16" height="14" viewBox="0 0 16 14"><rect x="0" y="0" width="14" height="1" fill="#1a1a1a"/><rect x="1" y="2" width="12" height="1" fill="#1a1a1a"/><rect x="0" y="4" width="14" height="1" fill="#1a1a1a"/><rect x="1" y="6" width="12" height="1" fill="#1a1a1a"/></svg>
<svg class="ab" style="left:334px;top:57px;" width="17" height="15" viewBox="0 0 17 15"><rect x="0.5" y="0.5" width="12" height="5" fill="#fff" stroke="#6e83a8"/><rect x="0.5" y="8.5" width="12" height="5" fill="#fff" stroke="#6e83a8"/><path d="M2 3h14M2 11h8" stroke="#b5532e"/><path d="M15 6 L15 10 L12 12" fill="none" stroke="#2f5fae"/></svg>
<svg class="ab" style="left:264px;top:81px;" width="16" height="14" viewBox="0 0 16 14"><rect x="0" y="0" width="14" height="1" fill="#1a1a1a"/><rect x="0" y="2" width="10" height="1" fill="#1a1a1a"/><rect x="0" y="4" width="14" height="1" fill="#1a1a1a"/><rect x="0" y="6" width="10" height="1" fill="#1a1a1a"/><rect x="0" y="8" width="14" height="1" fill="#1a1a1a"/><rect x="0" y="10" width="10" height="1" fill="#1a1a1a"/></svg>
<svg class="ab" style="left:287px;top:81px;" width="16" height="14" viewBox="0 0 16 14"><rect x="0" y="0" width="14" height="1" fill="#1a1a1a"/><rect x="2" y="2" width="10" height="1" fill="#1a1a1a"/><rect x="0" y="4" width="14" height="1" fill="#1a1a1a"/><rect x="2" y="6" width="10" height="1" fill="#1a1a1a"/><rect x="0" y="8" width="14" height="1" fill="#1a1a1a"/><rect x="2" y="10" width="10" height="1" fill="#1a1a1a"/></svg>
<svg class="ab" style="left:310px;top:81px;" width="16" height="14" viewBox="0 0 16 14"><rect x="0" y="0" width="14" height="1" fill="#1a1a1a"/><rect x="4" y="2" width="10" height="1" fill="#1a1a1a"/><rect x="0" y="4" width="14" height="1" fill="#1a1a1a"/><rect x="4" y="6" width="10" height="1" fill="#1a1a1a"/><rect x="0" y="8" width="14" height="1" fill="#1a1a1a"/><rect x="4" y="10" width="10" height="1" fill="#1a1a1a"/></svg>
<svg class="ab" style="left:334px;top:79px;" width="17" height="15" viewBox="0 0 17 15"><rect x="0.5" y="0.5" width="15" height="13" fill="#dbe6f5" stroke="#4d74b8"/><path d="M0.5 4.5h15M0.5 9.5h15M5.5 0.5v13M10.5 0.5v13" stroke="#9ab2d8"/><rect x="1" y="4" width="14" height="6" fill="#fff"/><text x="8" y="9.5" font-family="Liberation Serif" font-weight="bold" font-size="7" text-anchor="middle" fill="#1a1a1a">a</text><path d="M2 7h3M11 7h3" stroke="#1a1a1a"/></svg>
<svg class="ab" style="left:354px;top:85px;" width="6" height="4" viewBox="0 0 6 4"><path d="M0 0 L5 0 L2.5 3 Z" fill="#5a5a5a"/></svg>
<svg class="ab" style="left:263px;top:101px;" width="17" height="15" viewBox="0 0 17 15"><rect x="7" y="0" width="1" height="1" fill="#1a1a1a"/><rect x="7" y="2" width="1" height="1" fill="#1a1a1a"/><rect x="7" y="4" width="1" height="1" fill="#1a1a1a"/><rect x="7" y="6" width="1" height="1" fill="#1a1a1a"/><rect x="7" y="8" width="1" height="1" fill="#1a1a1a"/><rect x="7" y="10" width="1" height="1" fill="#1a1a1a"/><rect x="7" y="12" width="1" height="1" fill="#1a1a1a"/><rect x="7" y="14" width="1" height="1" fill="#1a1a1a"/><rect x="2" y="2" width="4" height="1" fill="#1a1a1a"/><rect x="8" y="2" width="8" height="1" fill="#1a1a1a"/><rect x="8" y="4" width="8" height="2" fill="#1a1a1a"/><rect x="8" y="7" width="5" height="2" fill="#1a1a1a"/><rect x="2" y="10" width="4" height="1" fill="#1a1a1a"/><rect x="8" y="10" width="8" height="1" fill="#1a1a1a"/><rect x="2" y="12" width="4" height="1" fill="#1a1a1a"/><rect x="8" y="12" width="3" height="1" fill="#1a1a1a"/><path d="M0 7.5 L3.5 5 L3.5 10 Z" fill="#3a6fd0"/><rect x="3" y="7" width="3" height="1.2" fill="#3a6fd0"/></svg>
<svg class="ab" style="left:285px;top:101px;" width="17" height="15" viewBox="0 0 17 15"><rect x="7" y="0" width="1" height="1" fill="#1a1a1a"/><rect x="7" y="2" width="1" height="1" fill="#1a1a1a"/><rect x="7" y="4" width="1" height="1" fill="#1a1a1a"/><rect x="7" y="6" width="1" height="1" fill="#1a1a1a"/><rect x="7" y="8" width="1" height="1" fill="#1a1a1a"/><rect x="7" y="10" width="1" height="1" fill="#1a1a1a"/><rect x="7" y="12" width="1" height="1" fill="#1a1a1a"/><rect x="7" y="14" width="1" height="1" fill="#1a1a1a"/><rect x="2" y="2" width="4" height="1" fill="#1a1a1a"/><rect x="8" y="2" width="8" height="1" fill="#1a1a1a"/><rect x="8" y="4" width="8" height="2" fill="#1a1a1a"/><rect x="8" y="7" width="5" height="2" fill="#1a1a1a"/><rect x="2" y="10" width="4" height="1" fill="#1a1a1a"/><rect x="8" y="10" width="8" height="1" fill="#1a1a1a"/><rect x="2" y="12" width="4" height="1" fill="#1a1a1a"/><rect x="8" y="12" width="3" height="1" fill="#1a1a1a"/><path d="M6 7.5 L2.5 5 L2.5 10 Z" fill="#3a6fd0"/><rect x="0" y="7" width="3" height="1.2" fill="#3a6fd0"/></svg>
<div class="ab" style="left:308px;top:99px;width:1px;height:20px;background:#c8d0da"></div>
<svg class="ab" style="left:316px;top:100px;" width="18" height="17" viewBox="0 0 18 17"><text x="2" y="11" font-family="Liberation Sans" font-weight="bold" font-size="10" fill="#1a1a1a" transform="rotate(-45 7 7)">ab</text><path d="M8.5 15.5 L16.5 7.5" stroke="#333" stroke-width="1"/><path d="M13.5 7 L17 7 L17 10.5" fill="none" stroke="#333" stroke-width="1"/></svg>
<svg class="ab" style="left:335px;top:107px;" width="6" height="4" viewBox="0 0 6 4"><path d="M0 0 L5 0 L2.5 3 Z" fill="#5a5a5a"/></svg>
<div class="ab" style="left:372px;top:54px;width:80px;height:21px;border:1px solid #c4ccd8;background:#fff"></div>
<div class="t" style="left:375.5px;top:60.04px;font-size:12px;color:#1a1a1a">Общий</div>
<svg class="ab" style="left:442px;top:63px;" width="6" height="4" viewBox="0 0 6 4"><path d="M0 0 L5 0 L2.5 3 Z" fill="#5a5a5a"/></svg>
<svg class="ab" style="left:375px;top:79px;" width="18" height="16" viewBox="0 0 18 16"><defs><linearGradient id="cb" x1="0" y1="0" x2="0" y2="1"><stop offset="0" stop-color="#6a9ae0"/><stop offset="1" stop-color="#2f5aa8"/></linearGradient></defs><rect x="0.5" y="0.5" width="15" height="8" fill="url(#cb)" stroke="#2a4a90"/><ellipse cx="8" cy="4.5" rx="5" ry="2.6" fill="none" stroke="#dfe9f8" stroke-width="1.1"/><ellipse cx="13" cy="9.5" rx="3.2" ry="1.3" fill="#f5c54a" stroke="#b8801a" stroke-width="0.6"/><ellipse cx="13" cy="11.5" rx="3.2" ry="1.3" fill="#f5c54a" stroke="#b8801a" stroke-width="0.6"/><ellipse cx="13" cy="13.5" rx="3.2" ry="1.3" fill="#f5c54a" stroke="#b8801a" stroke-width="0.6"/><ellipse cx="4.5" cy="11.5" rx="3" ry="1.2" fill="#f5c54a" stroke="#b8801a" stroke-width="0.6"/><ellipse cx="8" cy="14" rx="3" ry="1.2" fill="#f5c54a" stroke="#b8801a" stroke-width="0.6"/></svg>
<svg class="ab" style="left:397px;top:85px;" width="6" height="4" viewBox="0 0 6 4"><path d="M0 0 L5 0 L2.5 3 Z" fill="#5a5a5a"/></svg>
<div class="t" style="left:412px;top:80.70px;font-size:13px;color:#1a1a1a">%</div>
<div class="t" style="left:433.5px;top:81.77px;font-size:11.5px;color:#1a1a1a;letter-spacing:-1.4px">000</div>
<svg class="ab" style="left:375px;top:101px;" width="18" height="17" viewBox="0 0 18 17"><path d="M0.5 4 L4.5 1 L4.5 7 Z" fill="#3a70d0"/><path d="M3.5 4h3.5" stroke="#3a70d0" stroke-width="1.6"/><text x="7" y="8" font-family="Liberation Sans" font-size="9.5" fill="#1a1a1a" font-weight="bold">,0</text><text x="1.5" y="16" font-family="Liberation Sans" font-size="9.5" fill="#1a1a1a" font-weight="bold">,00</text></svg>
<svg class="ab" style="left:397px;top:101px;" width="18" height="17" viewBox="0 0 18 17"><text x="1.5" y="8" font-family="Liberation Sans" font-size="9.5" fill="#1a1a1a" font-weight="bold">,00</text><path d="M7 12 L3 9 L3 15 Z" fill="#3a70d0"/><path d="M0 12h4" stroke="#3a70d0" stroke-width="1.6"/><text x="7" y="16" font-family="Liberation Sans" font-size="9.5" fill="#1a1a1a" font-weight="bold">,0</text></svg>
<div class="ab" style="left:462px;top:55px;width:32px;height:31px;border:1px solid #cdd4de;border-radius:3px;background:linear-gradient(180deg,#fff 0,#f3f5f8 100%)"></div>
<svg class="ab" style="left:469px;top:62px;" width="20" height="20" viewBox="0 0 20 20"><text x="1" y="16" font-family="Liberation Serif" font-size="19" fill="#2a58a8">A</text><path d="M9 16.5 L17 9" stroke="#4a86d8" stroke-width="2.4" stroke-linecap="round"/><path d="M15.5 9 L19 5.5" stroke="#e0a838" stroke-width="2.2" stroke-linecap="round"/></svg>
<div class="t" style="left:458.00px;top:92.30px;width:40px;text-align:center;font-size:11.7px;color:#1f1f1f">Стили</div>
<svg class="ab" style="left:476px;top:108px;" width="6" height="4" viewBox="0 0 6 4"><path d="M0 0 L5 0 L2.5 3 Z" fill="#5a5a5a"/></svg>
<svg class="ab" style="left:507px;top:57px;" width="18" height="15" viewBox="0 0 18 15"><rect x="1.5" y="1.5" width="6" height="3" fill="#fff" stroke="#3c5274"/><rect x="1.5" y="8.5" width="6" height="3" fill="#fff" stroke="#3c5274"/><rect x="1.5" y="11.5" width="6" height="3" fill="#fff" stroke="#3c5274"/><rect x="11.5" y="5.5" width="6" height="3.5" fill="#8ab4ea" stroke="#2f5aa0"/><path d="M8.5 6.8h3M9.8 5.5v2.6" stroke="#1a1a1a" stroke-width="1"/></svg>
<div class="t" style="left:527px;top:60.17px;font-size:11.5px;color:#1f1f1f">Вставить</div>
<svg class="ab" style="left:579px;top:64px;" width="6" height="4" viewBox="0 0 6 4"><path d="M0 0 L5 0 L2.5 3 Z" fill="#5a5a5a"/></svg>
<svg class="ab" style="left:507px;top:79px;" width="18" height="15" viewBox="0 0 18 15"><rect x="1.5" y="1.5" width="6" height="3" fill="#fff" stroke="#3c5274"/><rect x="1.5" y="7.5" width="6" height="3" fill="#fff" stroke="#3c5274"/><rect x="1.5" y="10.5" width="6" height="3" fill="#fff" stroke="#3c5274"/><rect x="6.5" y="4.5" width="6" height="3" fill="#8ab4ea" stroke="#2f5aa0"/><path d="M10.5 1.5 L15.5 6.5 M15.5 1.5 L10.5 6.5" stroke="#e8402a" stroke-width="1.5"/></svg>
<div class="t" style="left:527px;top:81.77px;font-size:11.5px;color:#1f1f1f">Удалить</div>
<svg class="ab" style="left:574px;top:86px;" width="6" height="4" viewBox="0 0 6 4"><path d="M0 0 L5 0 L2.5 3 Z" fill="#5a5a5a"/></svg>
<svg class="ab" style="left:507px;top:100px;" width="18" height="17" viewBox="0 0 18 17"><rect x="1.5" y="4.5" width="15" height="11" fill="#fff" stroke="#3c5274"/><path d="M1.5 8.5h15M1.5 12h15M6.5 4.5v11M11.5 4.5v11" stroke="#7a8aa4"/><rect x="7" y="9" width="4" height="2.5" fill="#5a8ad8"/><path d="M1.5 1.5h15" stroke="#3c5274" stroke-dasharray="1 1"/><path d="M1.5 1.5v3M16.5 1.5v3" stroke="#3c5274"/></svg>
<div class="t" style="left:527px;top:103.27px;font-size:11.5px;color:#1f1f1f">Формат</div>
<svg class="ab" style="left:572px;top:108px;" width="6" height="4" viewBox="0 0 6 4"><path d="M0 0 L5 0 L2.5 3 Z" fill="#5a5a5a"/></svg>
<div class="ab" style="left:499.5px;top:72.3px;width:93.3px;height:28px;border:4.6px solid #e51c23;border-left-width:5.5px;border-radius:12px/10.5px"></div>
<div class="t" style="left:602px;top:57.95px;font-size:14px;font-family:'Liberation Serif';font-weight:bold;color:#1a1a1a">Σ</div>
<svg class="ab" style="left:620px;top:63px;" width="6" height="4" viewBox="0 0 6 4"><path d="M0 0 L5 0 L2.5 3 Z" fill="#5a5a5a"/></svg>
<svg class="ab" style="left:601px;top:78px;" width="14" height="17" viewBox="0 0 14 17"><rect x="0.5" y="0.5" width="13" height="16" fill="#dbe8f8" stroke="#4d7cc8"/><rect x="1" y="1" width="12" height="3" fill="#7aa6e0"/><path d="M7 5 L7 11" stroke="#2f6fcf" stroke-width="2.4"/><path d="M3 10 L11 10 L7 14 Z" fill="#2f6fcf"/></svg>
<svg class="ab" style="left:618px;top:86px;" width="6" height="4" viewBox="0 0 6 4"><path d="M0 0 L5 0 L2.5 3 Z" fill="#5a5a5a"/></svg>
<svg class="ab" style="left:601px;top:103px;" width="16" height="13" viewBox="0 0 16 13"><path d="M1.5 8 L8.5 1 L13.5 3.5 L6.5 10.5 Z" fill="#f4f6fa" stroke="#5a6a86"/><path d="M9 6.5 L5.5 10.5" stroke="#4a78c8" stroke-width="2"/><path d="M1.5 8 L4 10.5 L6.5 10.5" fill="none" stroke="#5a6a86"/><path d="M5 12.3h9" stroke="#1a1a1a" stroke-width="1.1"/></svg>
<svg class="ab" style="left:618px;top:108px;" width="6" height="4" viewBox="0 0 6 4"><path d="M0 0 L5 0 L2.5 3 Z" fill="#5a5a5a"/></svg>
<svg class="ab" style="left:647px;top:57px;" width="33" height="31" viewBox="0 0 33 31"><defs><linearGradient id="fg" x1="0" y1="0" x2="1" y2="0"><stop offset="0" stop-color="#d8dde4"/><stop offset="0.5" stop-color="#a9b0ba"/><stop offset="1" stop-color="#c9ced6"/></linearGradient></defs><path d="M11 4 L31 4 L24 15 L24 28 L19 25 L19 15 Z" fill="url(#fg)" stroke="#8a929e" stroke-width="0.8"/><text x="0" y="15" font-family="Liberation Serif" font-weight="bold" font-size="16" fill="#2f5fae">A</text><text x="0" y="29" font-family="Liberation Serif" font-weight="bold" font-size="16" fill="#8a4535">Я</text></svg>
<div class="t" style="left:623.00px;top:94.10px;width:80px;text-align:center;font-size:11.7px;color:#1f1f1f">Сортировка</div>
<div class="t" style="left:624.50px;top:106.10px;width:70px;text-align:center;font-size:11.7px;color:#1f1f1f">и фильтр</div>
<svg class="ab" style="left:688px;top:111px;" width="6" height="4" viewBox="0 0 6 4"><path d="M0 0 L5 0 L2.5 3 Z" fill="#5a5a5a"/></svg>
<svg class="ab" style="left:714px;top:58px;" width="30" height="27" viewBox="0 0 30 27"><defs><linearGradient id="bg1" x1="0" y1="0" x2="1" y2="0"><stop offset="0" stop-color="#5a74a0"/><stop offset="0.35" stop-color="#a8bcd8"/><stop offset="1" stop-color="#3e5884"/></linearGradient></defs><rect x="2" y="11" width="11" height="15" rx="2" fill="url(#bg1)" stroke="#3a5078" stroke-width="0.8"/><rect x="17" y="11" width="11" height="15" rx="2" fill="url(#bg1)" stroke="#3a5078" stroke-width="0.8"/><rect x="4" y="3" width="7" height="9" rx="2" fill="url(#bg1)" stroke="#3a5078" stroke-width="0.8"/><rect x="19" y="3" width="7" height="9" rx="2" fill="url(#bg1)" stroke="#3a5078" stroke-width="0.8"/><rect x="12" y="13" width="6" height="7" fill="#6a82a8"/><ellipse cx="7.5" cy="3.5" rx="3" ry="1.5" fill="#c8d6ea"/><ellipse cx="22.5" cy="3.5" rx="3" ry="1.5" fill="#c8d6ea"/></svg>
<div class="t" style="left:699.00px;top:94.10px;width:60px;text-align:center;font-size:11.7px;color:#1f1f1f">Найти и</div>
<div class="t" style="left:691.00px;top:106.10px;width:70px;text-align:center;font-size:11.7px;color:#1f1f1f">выделить</div>
<svg class="ab" style="left:754px;top:111px;" width="6" height="4" viewBox="0 0 6 4"><path d="M0 0 L5 0 L2.5 3 Z" fill="#5a5a5a"/></svg>
<div class="ab" style="left:8px;top:138px;width:853px;height:3px;background:#dde2e8"></div>
<div class="ab" style="left:8px;top:141px;width:853px;height:22px;background:#fff;border-top:1px solid #a9b3bf;border-bottom:1px solid #a9b3bf"></div>
<div class="t" style="left:59.00px;top:146.37px;width:40px;text-align:center;font-size:13.5px;color:#1a1a1a">A6</div>
<svg class="ab" style="left:156px;top:151px;" width="8" height="5" viewBox="0 0 8 5"><path d="M0 0 L7 0 L3.5 4 Z" fill="#1a1a1a"/></svg>
<div class="ab" style="left:169px;top:142px;width:85px;height:20px;background:#dfe3e9;border-radius:10px 0 0 10px;border-left:1px solid #a9b3bf;border-right:1px solid #c6cdd6"></div>
<svg class="ab" style="left:175px;top:148px;" width="9" height="8" viewBox="0 0 9 8"><circle cx="4.2" cy="4" r="4" fill="#c5cbd3"/><rect x="1" y="4" width="7" height="2" fill="#e8ebef"/></svg>
<div class="t" style="left:235px;top:144.65px;font-size:14px;font-family:'Liberation Serif';font-weight:bold;color:#2a2a2a"><i>f</i><i style="font-size:11px;margin-left:-1px">x</i></div>
<div class="ab" style="left:845px;top:142px;width:16px;height:20px;background:#dfe3e8;border-left:1px solid #c6cdd6"></div>
<svg class="ab" style="left:849px;top:148px;" width="9" height="6" viewBox="0 0 9 6"><path d="M1 1 L4.5 4.5 L8 1" fill="none" stroke="#4a4a4a" stroke-width="1.6"/></svg>
<div class="ab" style="left:845px;top:166px;width:16px;height:440px;background:#dfe3e8"></div>
<div class="ab" style="left:846px;top:167px;width:15px;height:8px;background:#fff;border:1px solid #9aa4b0"></div>
<svg class="ab" style="left:849px;top:169px;" width="9" height="3" viewBox="0 0 9 3"><path d="M1 1.5h7" stroke="#8a94a0"/></svg>
<svg class="ab" style="left:847px;top:181px;" width="11" height="6" viewBox="0 0 11 6"><path d="M0.5 5.5 L5.5 0.5 L10.5 5.5 Z" fill="#4a4a4a"/></svg>
<div class="ab" style="left:845px;top:192px;width:15px;height:193px;border:1px solid #9aa4b0;border-radius:2px;background:linear-gradient(90deg,#e8ebf0 0,#f4f6f8 40%,#dde1e7 100%)"></div>
<svg class="ab" style="left:849px;top:284px;" width="8" height="6" viewBox="0 0 8 6"><path d="M0 0.5h7M0 2.5h7M0 4.5h7" stroke="#6e7886"/></svg>
<svg class="ab" style="left:847px;top:594px;" width="11" height="6" viewBox="0 0 11 6"><path d="M0.5 0.5 L10.5 0.5 L5.5 5.5 Z" fill="#4a4a4a"/></svg>
<div class="ab" style="left:845px;top:604px;width:16px;height:1px;background:#c4cad2"></div>
<div class="ab" style="left:8px;top:605px;width:853px;height:16px;background:#dfe3e8"></div>
<div class="ab" style="left:8px;top:605px;width:63px;height:1px;background:#9aa4b0"></div>
<div class="ab" style="left:8px;top:620px;width:853px;height:1px;background:#a4adb9"></div>
<div class="ab" style="left:70px;top:606px;width:1px;height:14px;background:#a8b0bb"></div>
<svg class="ab" style="left:13px;top:609px;" width="8" height="8" viewBox="0 0 8 8"><rect x="0" y="0" width="1.4" height="7" fill="#444"/><path d="M7 0 L2.5 3.5 L7 7 Z" fill="#444"/></svg>
<svg class="ab" style="left:29px;top:609px;" width="6" height="8" viewBox="0 0 6 8"><path d="M5 0 L0.5 3.5 L5 7 Z" fill="#444"/></svg>
<svg class="ab" style="left:43px;top:609px;" width="6" height="8" viewBox="0 0 6 8"><path d="M0.5 0 L5 3.5 L0.5 7 Z" fill="#444"/></svg>
<svg class="ab" style="left:57px;top:609px;" width="8" height="8" viewBox="0 0 8 8"><path d="M0 0 L4.5 3.5 L0 7 Z" fill="#444"/><rect x="5.6" y="0" width="1.4" height="7" fill="#444"/></svg>
<svg class="ab" style="left:71px;top:604px;" width="440" height="17" viewBox="0 0 440 17"><defs><linearGradient id="tg" x1="0" y1="0" x2="0" y2="1"><stop offset="0" stop-color="#e9edf2"/><stop offset="1" stop-color="#dce1e7"/></linearGradient></defs><rect x="0" y="1" width="440" height="15" fill="#dfe3e8"/><path d="M63.5 1 L116 1 L103 15.5 L50 15.5 Z" fill="url(#tg)"/><path d="M116 1 L168.5 1 L155.5 15.5 L103 15.5 Z" fill="url(#tg)"/><path d="M168.5 1 L202 1 L189 15.5 L155.5 15.5 Z" fill="url(#tg)"/><rect x="63" y="1" width="377" height="1" fill="#9aa4b0"/><path d="M0 1 L64 1 L50.5 15.5 L0 15.5 Z" fill="#fff"/><path d="M63.5 1.5 L50 16 M116 1.5 L102.5 16 M168.5 1.5 L155 16 M202 1.5 L188.5 16" stroke="#8e98a6" stroke-width="1"/><rect x="0" y="16" width="440" height="1" fill="#a4adb9"/></svg>
<div class="t" style="left:68.00px;top:607.72px;width:60px;text-align:center;font-size:12.5px;font-weight:bold;color:#26344a">Лист1</div>
<div class="t" style="left:120.50px;top:607.64px;width:60px;text-align:center;font-size:12px;color:#3c4c64">Лист2</div>
<div class="t" style="left:173.50px;top:607.64px;width:60px;text-align:center;font-size:12px;color:#3c4c64">Лист3</div>
<svg class="ab" style="left:240px;top:606px;" width="16" height="14" viewBox="0 0 16 14"><rect x="3.5" y="3.5" width="11" height="9" rx="2" fill="#eef3fb" stroke="#4a6a98"/><circle cx="4" cy="4" r="2.6" fill="#f5b335"/><path d="M4 0v8M0 4h8M1.2 1.2l5.6 5.6M6.8 1.2l-5.6 5.6" stroke="#f5a623" stroke-width="0.9"/></svg>
<div class="ab" style="left:510px;top:606px;width:8px;height:15px;background:#fff;border:1px solid #8e98a4"></div>
<div class="ab" style="left:513px;top:609px;width:1px;height:8px;background:#7a8490"></div>
<svg class="ab" style="left:522px;top:609px;" width="7" height="10" viewBox="0 0 7 10"><path d="M6 0 L0.5 4.5 L6 9 Z" fill="#4a4a4a"/></svg>
<div class="ab" style="left:535px;top:605px;width:250px;height:16px;border:1px solid #8e98a4;border-radius:3px;background:linear-gradient(180deg,#fafbfc 0,#eef1f4 50%,#dfe3e8 100%)"></div>
<svg class="ab" style="left:655px;top:609px;" width="8" height="8" viewBox="0 0 8 8"><path d="M1.5 0v7M3.5 0v7M5.5 0v7" stroke="#6e7886"/></svg>
<svg class="ab" style="left:826px;top:609px;" width="7" height="10" viewBox="0 0 7 10"><path d="M0.5 0 L6 4.5 L0.5 9 Z" fill="#4a4a4a"/></svg>
<div class="ab" style="left:837px;top:606px;width:8px;height:15px;background:#fff;border:1px solid #8e98a4"></div>
<div class="ab" style="left:840px;top:609px;width:1px;height:8px;background:#7a8490"></div>
<div class="ab" style="left:845px;top:605px;width:16px;height:16px;background:#dfe3e8"></div>
<div class="ab" style="left:8px;top:621px;width:853px;height:1px;background:#f0f2f5"></div>
<div class="ab" style="left:8px;top:622px;width:853px;height:21px;background:linear-gradient(180deg,#f1f3f5 0,#e2e5e9 45%,#d3d7dd 75%,#c9cdd4 100%)"></div>
<div class="ab" style="left:7px;top:643px;width:855px;height:1px;background:#5f6f84"></div>
<div class="t" style="left:15.5px;top:626.59px;font-size:12.3px;color:#26344a">Готово</div>
<div class="ab" style="left:62px;top:624px;width:1px;height:18px;background:#a9b1bc"></div>
<div class="ab" style="left:63px;top:624px;width:1px;height:18px;background:#fff"></div>
<svg class="ab" style="left:72px;top:625px;" width="16" height="13" viewBox="0 0 16 13"><rect x="1.5" y="1.5" width="14" height="11" fill="#fff" stroke="#2f5aa0"/><rect x="1.5" y="1.5" width="14" height="3" fill="#4a7cc8"/><path d="M5 7h2M9 7h5M5 9h2M9 9h5M5 11h2M9 11h5" stroke="#4a7cc8"/><circle cx="4" cy="3" r="2.8" fill="#e2452a"/></svg>
<div class="ab" style="left:97px;top:624px;width:1px;height:18px;background:#a9b1bc"></div>
<div class="ab" style="left:98px;top:624px;width:1px;height:18px;background:#fff"></div>
<div class="ab" style="left:604px;top:624px;width:1px;height:18px;background:#a9b1bc"></div>
<div class="ab" style="left:605px;top:624px;width:1px;height:18px;background:#fff"></div>
<div class="ab" style="left:609px;top:623px;width:18px;height:19px;border:1px solid #c29b4a;border-radius:2px;background:linear-gradient(180deg,#fde9a6 0,#fcd56a 100%)"></div>
<svg class="ab" style="left:612px;top:627px;" width="13" height="11" viewBox="0 0 13 11"><rect x="0.5" y="0.5" width="12" height="9" fill="#fff" stroke="#3a3a3a"/><path d="M0.5 3.5h12M0.5 6.5h12M4.5 0.5v9M8.5 0.5v9" stroke="#3a3a3a"/></svg>
<svg class="ab" style="left:630px;top:627px;" width="14" height="12" viewBox="0 0 14 12"><rect x="0.5" y="0.5" width="13" height="10" fill="#e8ebf0" stroke="#5a6270"/><rect x="3.5" y="2.5" width="7" height="6" fill="#fff" stroke="#5a6270"/><path d="M5 4.5h4M5 6.5h4" stroke="#5a6270"/></svg>
<svg class="ab" style="left:649px;top:626px;" width="14" height="13" viewBox="0 0 14 13"><rect x="0.5" y="0.5" width="13" height="11" fill="#c8cdd4" stroke="#5a6270"/><rect x="2" y="2" width="4" height="9" fill="#fff"/><rect x="8" y="2" width="4" height="6" fill="#fff"/></svg>
<div class="t" style="left:668.50px;top:626.84px;width:40px;text-align:center;font-size:12px;color:#26344a">100%</div>
<svg class="ab" style="left:709px;top:624px;" width="18" height="17" viewBox="0 0 18 17"><circle cx="8.5" cy="8.5" r="7.6" fill="url(#zg)" stroke="#8a929e"/><rect x="4.5" y="7.6" width="8" height="2" fill="#3a3a3a"/><defs><linearGradient id="zg" x1="0" y1="0" x2="0" y2="1"><stop offset="0" stop-color="#fff"/><stop offset="1" stop-color="#dfe3e8"/></linearGradient></defs></svg>
<div class="ab" style="left:725px;top:631px;width:102px;height:1px;background:#9aa2ae"></div>
<div class="ab" style="left:725px;top:632px;width:102px;height:1px;background:#fff"></div>
<svg class="ab" style="left:771px;top:625px;" width="10" height="13" viewBox="0 0 10 13"><path d="M0.5 0.5 L9 0.5 L9 8 L4.75 12 L0.5 8 Z" fill="url(#zg2)" stroke="#6e7886"/><defs><linearGradient id="zg2" x1="0" y1="0" x2="0" y2="1"><stop offset="0" stop-color="#fff"/><stop offset="1" stop-color="#d6dbe2"/></linearGradient></defs></svg>
<svg class="ab" style="left:826px;top:624px;" width="18" height="17" viewBox="0 0 18 17"><circle cx="8.5" cy="8.5" r="7.6" fill="url(#zg)" stroke="#8a929e"/><rect x="4.5" y="7.6" width="8" height="2" fill="#3a3a3a"/><rect x="7.5" y="4.5" width="2" height="8" fill="#3a3a3a"/></svg>
<svg class="ab" style="left:851px;top:631px;" width="10" height="10" viewBox="0 0 10 10"><rect x="7" y="1" width="2" height="2" fill="#b8c0ca"/><rect x="4" y="4" width="2" height="2" fill="#b8c0ca"/><rect x="7" y="4" width="2" height="2" fill="#b8c0ca"/><rect x="1" y="7" width="2" height="2" fill="#b8c0ca"/><rect x="4" y="7" width="2" height="2" fill="#b8c0ca"/><rect x="7" y="7" width="2" height="2" fill="#b8c0ca"/></svg>
</body></html>
